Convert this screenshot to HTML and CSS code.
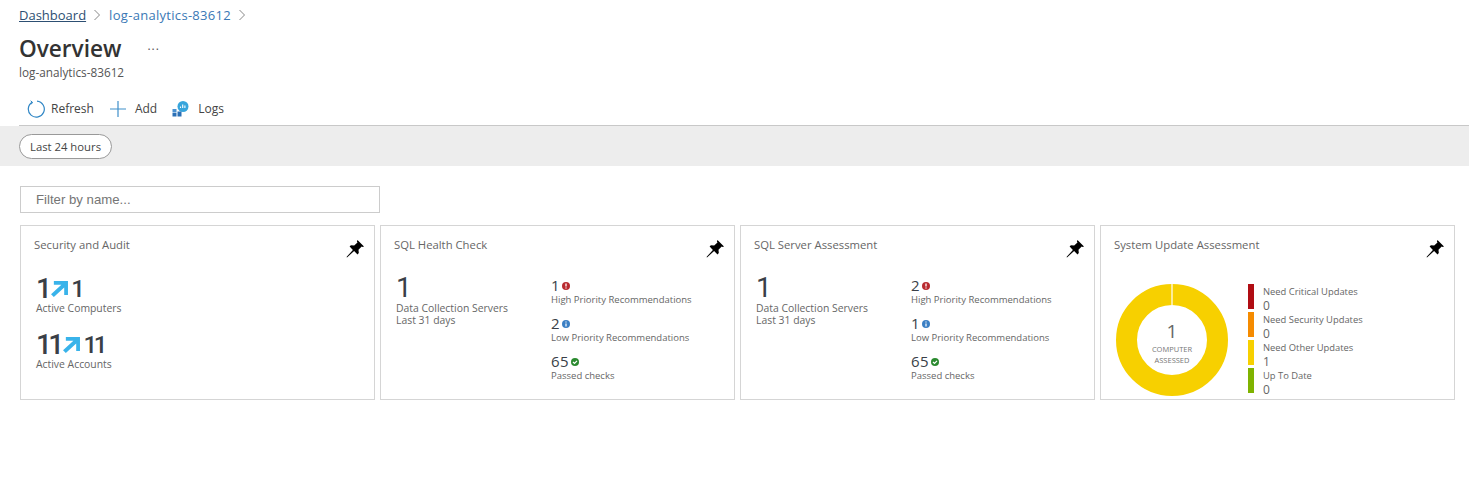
FILE: index.html
```html
<!DOCTYPE html>
<html lang="en">
<head>
  <meta charset="UTF-8" />
  <title>Overview</title>
  <link rel="stylesheet" href="styles.css">
</head>
<body>
  <div class="breadcrumb">
    <a class="crumb-home">Dashboard</a>
    <svg class="chevron" viewBox="0 0 8 12"><path d="M1.5 1l5 5-5 5" /></svg>
    <a class="crumb-link">log-analytics-83612</a>
    <svg class="chevron" viewBox="0 0 8 12"><path d="M1.5 1l5 5-5 5" /></svg>
  </div>

  <div class="title-row">
    <h1>Overview</h1>
    <span class="more">...</span>
  </div>
  <div class="subtitle">log-analytics-83612</div>

  <div class="toolbar">
    <button class="tool tool-refresh">
      <svg width="18" height="18" viewBox="0 0 18 18"><path d="M5.2 2.2A8 8 0 1 0 10 1.1" fill="none" stroke="#2f86c5" stroke-width="1.2" /><path d="M3.6 .8l2 1.6-1.6 2" fill="none" stroke="#2f86c5" stroke-width="1" /></svg>
      Refresh
    </button>
    <button class="tool tool-add">
      <svg width="16" height="16" viewBox="0 0 16 16"><path d="M8 0v16M0 8h16" stroke="#3f8fca" stroke-width="1.2" /></svg>
      Add
    </button>
    <button class="tool tool-logs">
      <svg width="17" height="16" viewBox="0 0 16 16">
        <circle cx="10.5" cy="5.5" r="5.5" fill="#37a5dc" />
        <path d="M8 7V5.5M10.2 7V3.5M12.4 7V4.5" stroke="#fff" stroke-width="1.1" />
        <rect x="0" y="8" width="4" height="3.5" fill="#4a90d0" />
        <rect x="5" y="10.5" width="4" height="5" fill="#2a6fb5" />
        <rect x="0" y="12" width="4" height="3.5" fill="#2a6fb5" />
      </svg>
      Logs
    </button>
  </div>

  <div class="filter-band">
    <button class="pill">Last 24 hours</button>
  </div>

  <div class="content">
    <input class="filter-input" type="text" placeholder="Filter by name..." />

    <div class="cards">
      <section class="card">
        <h2>Security and Audit</h2>
        <svg class="pin" viewBox="0 0 18 18"><path d="M11.5 0L18 6.5l-1.3 .6-1-.6-3.2 3.3.3 3.3-1.3 1.3-3.4-3.4L1 17.5 .5 17l6.4-7.1L3.6 6.6l1.3-1.3 3.3 .3 3.3-3.2-.6-1z" /></svg>
        <div class="stat stat-first">
          <div class="stat-values">
            <span class="big">1</span>
            <svg class="trend" viewBox="0 0 18 17"><path d="M3 0h15v15h-4V7L3 17 0 14 11 4H3z" /></svg>
            <span class="mid">1</span>
          </div>
          <div class="label">Active Computers</div>
        </div>
        <div class="stat">
          <div class="stat-values">
            <span class="big">11</span>
            <svg class="trend" viewBox="0 0 18 17"><path d="M3 0h15v15h-4V7L3 17 0 14 11 4H3z" /></svg>
            <span class="mid">11</span>
          </div>
          <div class="label">Active Accounts</div>
        </div>
      </section>

      <section class="card">
        <h2>SQL Health Check</h2>
        <svg class="pin" viewBox="0 0 18 18"><path d="M11.5 0L18 6.5l-1.3 .6-1-.6-3.2 3.3.3 3.3-1.3 1.3-3.4-3.4L1 17.5 .5 17l6.4-7.1L3.6 6.6l1.3-1.3 3.3 .3 3.3-3.2-.6-1z" /></svg>
        <div class="sql-body">
          <div class="sql-left">
            <div class="big sql-big">1</div>
            <div class="label">Data Collection Servers</div>
            <div class="label">Last 31 days</div>
          </div>
          <div class="sql-right">
            <div class="rec">
              <div class="rec-value">1 <svg class="dot" viewBox="0 0 8 8"><circle cx="4" cy="4" r="4" fill="#b92b30" /><path d="M4 1.5v3M4 5.5v1" stroke="#fff" stroke-width="1.3" /></svg></div>
              <div class="rec-label">High Priority Recommendations</div>
            </div>
            <div class="rec">
              <div class="rec-value">2 <svg class="dot" viewBox="0 0 8 8"><circle cx="4" cy="4" r="4" fill="#3b7fc4" /><path d="M4 1.5v1M4 3.5v3" stroke="#fff" stroke-width="1.2" /></svg></div>
              <div class="rec-label">Low Priority Recommendations</div>
            </div>
            <div class="rec">
              <div class="rec-value">65 <svg class="dot" viewBox="0 0 8 8"><circle cx="4" cy="4" r="4" fill="#2b8a2f" /><path d="M2 4l1.5 1.5L6 2.8" fill="none" stroke="#fff" stroke-width="1.2" /></svg></div>
              <div class="rec-label">Passed checks</div>
            </div>
          </div>
        </div>
      </section>

      <section class="card">
        <h2>SQL Server Assessment</h2>
        <svg class="pin" viewBox="0 0 18 18"><path d="M11.5 0L18 6.5l-1.3 .6-1-.6-3.2 3.3.3 3.3-1.3 1.3-3.4-3.4L1 17.5 .5 17l6.4-7.1L3.6 6.6l1.3-1.3 3.3 .3 3.3-3.2-.6-1z" /></svg>
        <div class="sql-body">
          <div class="sql-left">
            <div class="big sql-big">1</div>
            <div class="label">Data Collection Servers</div>
            <div class="label">Last 31 days</div>
          </div>
          <div class="sql-right">
            <div class="rec">
              <div class="rec-value">2 <svg class="dot" viewBox="0 0 8 8"><circle cx="4" cy="4" r="4" fill="#b92b30" /><path d="M4 1.5v3M4 5.5v1" stroke="#fff" stroke-width="1.3" /></svg></div>
              <div class="rec-label">High Priority Recommendations</div>
            </div>
            <div class="rec">
              <div class="rec-value">1 <svg class="dot" viewBox="0 0 8 8"><circle cx="4" cy="4" r="4" fill="#3b7fc4" /><path d="M4 1.5v1M4 3.5v3" stroke="#fff" stroke-width="1.2" /></svg></div>
              <div class="rec-label">Low Priority Recommendations</div>
            </div>
            <div class="rec">
              <div class="rec-value">65 <svg class="dot" viewBox="0 0 8 8"><circle cx="4" cy="4" r="4" fill="#2b8a2f" /><path d="M2 4l1.5 1.5L6 2.8" fill="none" stroke="#fff" stroke-width="1.2" /></svg></div>
              <div class="rec-label">Passed checks</div>
            </div>
          </div>
        </div>
      </section>

      <section class="card">
        <h2>System Update Assessment</h2>
        <svg class="pin" viewBox="0 0 18 18"><path d="M11.5 0L18 6.5l-1.3 .6-1-.6-3.2 3.3.3 3.3-1.3 1.3-3.4-3.4L1 17.5 .5 17l6.4-7.1L3.6 6.6l1.3-1.3 3.3 .3 3.3-3.2-.6-1z" /></svg>
        <div class="update-body">
          <div class="donut">
            <svg width="112" height="112" viewBox="0 0 112 112">
              <circle cx="56" cy="56" r="45.5" fill="none" stroke="#f7d000" stroke-width="21" />
              <path d="M56 0v21" stroke="#fff" stroke-width="1.2" />
            </svg>
            <div class="donut-center">
              <div class="donut-num">1</div>
              <div class="donut-text">COMPUTER</div>
              <div class="donut-text">ASSESSED</div>
            </div>
          </div>
          <div class="legend">
            <div class="legend-row"><span class="legend-bar bar-red"></span><div><div class="legend-label">Need Critical Updates</div><div class="legend-num">0</div></div></div>
            <div class="legend-row"><span class="legend-bar bar-orange"></span><div><div class="legend-label">Need Security Updates</div><div class="legend-num">0</div></div></div>
            <div class="legend-row"><span class="legend-bar bar-yellow"></span><div><div class="legend-label">Need Other Updates</div><div class="legend-num">1</div></div></div>
            <div class="legend-row"><span class="legend-bar bar-green"></span><div><div class="legend-label">Up To Date</div><div class="legend-num">0</div></div></div>
          </div>
        </div>
      </section>
    </div>
  </div>
</body>
</html>
```
FILE: styles.css
```css
* {
  box-sizing: border-box;
}

body {
  margin: 0;
  background: #fff;
  color: #444;
  font-family: "Open Sans", "Noto Sans", sans-serif;
  overflow: hidden;
}

.breadcrumb {
  display: flex;
  align-items: center;
  height: 16px;
  margin: 7px 0 0 19px;
  font-size: 13px;
}

.crumb-home {
  color: #2d4f73;
  text-decoration: underline;
}

.crumb-link {
  color: #3a78b5;
  letter-spacing: .3px;
}

.chevron {
  width: 8px;
  height: 12px;
  margin: 0 8px 0 7px;
  fill: none;
  stroke: #888;
  stroke-width: 1;
}

.title-row {
  display: flex;
  align-items: center;
  height: 34px;
  margin: 8px 0 0 19px;
}

h1 {
  margin: 0;
  font-size: 22.6px;
  font-weight: 600;
  color: #333;
}

.more {
  margin: -6px 0 0 26px;
  font-size: 12px;
  color: #555;
  letter-spacing: 1px;
}

.subtitle {
  margin: -1px 0 0 19px;
  font-size: 11.75px;
  line-height: 16px;
  color: #555;
}

.toolbar {
  display: flex;
  align-items: center;
  height: 36px;
  margin: 10px 0 0 19px;
  border-bottom: 1px solid #c8c8c8;
  padding-top: 2px;
}

.tool {
  display: flex;
  align-items: center;
  gap: 6px;
  padding: 0;
  border: none;
  background: none;
  font: 12px "Open Sans", "Noto Sans", sans-serif;
  color: #444;
}

.tool-refresh {
  margin: 0 16px 0 8px;
}

.tool-add {
  margin-right: 15px;
  gap: 9px;
}

.tool-logs {
  gap: 9px;
}

.filter-band {
  display: flex;
  align-items: center;
  height: 40px;
  padding-left: 19px;
  background: #ededed;
}

.pill {
  height: 25px;
  padding: 0 10px;
  border: 1px solid #999;
  border-radius: 13px;
  background: #fff;
  font: 11.3px "Open Sans", "Noto Sans", sans-serif;
  color: #444;
}

.content {
  padding: 20px 0 0 20px;
}

.filter-input {
  display: block;
  width: 360px;
  height: 27px;
  padding: 0 15px;
  border: 1px solid #ccc;
  font: 13.2px "Liberation Sans", sans-serif;
  outline: none;
}

.filter-input::placeholder {
  color: #757575;
}

.cards {
  display: grid;
  grid-template-columns: repeat(4, 355px);
  gap: 5px;
  margin-top: 12px;
}

.card {
  position: relative;
  height: 175px;
  padding: 11px 13px;
  border: 1px solid #d5d5d5;
}

h2 {
  margin: 0;
  font-size: 11.3px;
  line-height: 15px;
  font-weight: 400;
  color: #666;
}

.pin {
  position: absolute;
  top: 14px;
  right: 10px;
  width: 18px;
  height: 18px;
  fill: #000;
}

.stat {
  margin-top: 16px;
  padding-left: 2px;
}

.stat-first {
  margin-top: 23px;
}

.stat-values {
  display: flex;
  align-items: center;
  height: 27px;
}

.big {
  font-family: Roboto, sans-serif;
  font-size: 28px;
  line-height: 28px;
  font-weight: 500;
  color: #3a3f47;
  letter-spacing: -3.7px;
}

.mid {
  font-family: Roboto, sans-serif;
  font-size: 24px;
  line-height: 28px;
  font-weight: 500;
  color: #3a3f47;
  letter-spacing: -3.4px;
}

.trend {
  width: 17px;
  height: 16px;
  margin: 0 3px 0 3px;
  fill: #39b3ea;
}

.label {
  font-size: 10.4px;
  line-height: 13px;
  color: #666;
}

.sql-body {
  display: grid;
  grid-template-columns: 155px 1fr;
  margin-top: 22px;
  padding-left: 2px;
}

.sql-big {
  font-weight: 400;
}

.sql-left .label {
  line-height: 12px;
}

.sql-right {
  padding-top: 2px;
}

.rec {
  height: 38px;
}

.rec-value {
  display: flex;
  align-items: center;
  gap: 2px;
  height: 18px;
  font-size: 15px;
  letter-spacing: .5px;
  color: #3a3f47;
}

.dot {
  width: 8px;
  height: 8px;
  margin-top: 2px;
}

.rec-label {
  font-size: 9.5px;
  line-height: 11px;
  color: #666;
}

.update-body {
  display: flex;
  margin-top: 32px;
  margin-left: 2px;
}

.donut {
  position: relative;
  width: 112px;
  height: 112px;
}

.donut-center {
  position: absolute;
  top: 34px;
  left: 0;
  right: 0;
  text-align: center;
}

.donut-num {
  font-size: 19px;
  line-height: 26px;
  color: #666;
}

.donut-text {
  font-size: 7.5px;
  line-height: 11px;
  color: #777;
}

.legend {
  margin-left: 20px;
}

.legend-row {
  display: flex;
  gap: 9px;
  height: 28px;
}

.legend-bar {
  width: 6px;
  height: 25px;
}

.bar-red { background: #b00d13; }
.bar-orange { background: #f58b00; }
.bar-yellow { background: #f7d000; }
.bar-green { background: #7fb300; }

.legend-label {
  font-size: 9.4px;
  line-height: 15px;
  color: #666;
}

.legend-num {
  font-size: 12px;
  line-height: 13px;
  color: #666;
}
```
